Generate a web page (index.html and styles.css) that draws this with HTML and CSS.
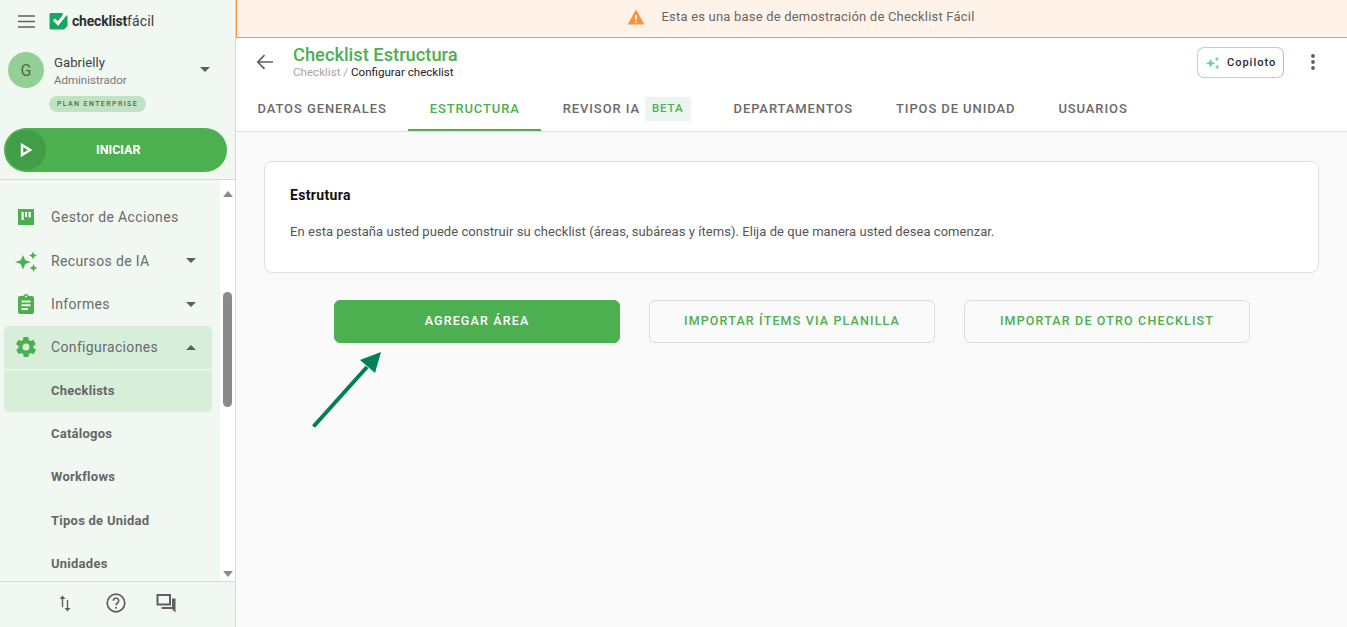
FILE: index.html
```html
<!DOCTYPE html>
<html lang="es">
<head>
    <meta charset="UTF-8">
    <meta name="viewport" content="width=device-width, initial-scale=1.0">
    <title>Checklist Estructura</title>
    <link rel="stylesheet" href="styles.css">
</head>
<body>
    <div class="app">
        <aside class="sidebar">
            <div class="side-top">
                <div class="brand">
                    <svg class="burger" width="17" height="13" viewBox="0 0 17 13"><path d="M0 1h17M0 6.500h17M0 12h17" stroke="#5f5f5f" stroke-width="1.700" fill="none"/></svg>
                    <svg class="logo" width="20" height="20" viewBox="0 0 20 20">
                        <path d="M2 2h12l-1 1.500 5.500 1V15l-3.500 3.500H2a1.500 1.500 0 0 1-1.500-1.500V3.500A1.500 1.500 0 0 1 2 2z" fill="#14a860"/>
                        <path d="M5 8.500l4 4 8-10" stroke="#fff" stroke-width="3" fill="none"/>
                    </svg>
                    <span class="logo-text"><b>checklist</b>fácil</span>
                </div>
                <div class="user">
                    <div class="avatar">G</div>
                    <div class="user-info">
                        <div class="user-name">Gabrielly</div>
                        <div class="user-role">Administrador</div>
                    </div>
                    <span class="caret caret-user"></span>
                </div>
                <div class="plan">PLAN ENTERPRISE</div>
                <button class="start">
                    <span class="start-icon">
                        <svg width="12" height="14" viewBox="0 0 12 14"><path d="M2 2v10l8-5z" fill="none" stroke="#fff" stroke-width="2.400"/></svg>
                    </span>
                    <span class="start-text">INICIAR</span>
                </button>
            </div>
            <div class="side-scroll">
                <nav class="nav">
                    <a class="nav-item">
                        <svg class="nav-icon" width="24" height="24" viewBox="0 0 24 24"><path fill="#4caf50" d="M4 4h16v16H4z"/><path fill="#fff" d="M7.500 7h2.200v8H7.500zM11 7h2v5h-2zM14.500 7h2.200v5.500h-2.200z"/></svg>
                        <span>Gestor de Acciones</span>
                    </a>
                    <a class="nav-item">
                        <svg class="nav-icon" width="24" height="24" viewBox="0 0 24 24"><path fill="#4caf50" d="M9 6l2.300 5.200L17 13l-5.700 2L9 20.500 6.700 15 1 13l5.700-1.800zM19 2.500l1.200 2.800L23 6.500l-2.800 1.200L19 10.500l-1.200-2.800L15 6.500l2.800-1.200zM19.500 15l1.200 2.800 2.800 1.200-2.800 1.200-1.200 2.800-1.200-2.800-2.800-1.200 2.800-1.200z"/></svg>
                        <span>Recursos de IA</span>
                        <span class="caret"></span>
                    </a>
                    <a class="nav-item">
                        <svg class="nav-icon" width="24" height="24" viewBox="0 0 24 24"><path fill="#4caf50" fill-rule="evenodd" d="M6 4h3.200a3 3 0 0 1 5.600 0H18a2 2 0 0 1 2 2v14a2 2 0 0 1-2 2H6a2 2 0 0 1-2-2V6a2 2 0 0 1 2-2zm6-.6a1 1 0 1 0 0 2 1 1 0 0 0 0-2zM7.500 8.500v2h9v-2zm0 3.800v2h9v-2zm0 3.700v2h6.500v-2z"/></svg>
                        <span>Informes</span>
                        <span class="caret"></span>
                    </a>
                    <a class="nav-item is-open">
                        <svg class="nav-icon" width="24" height="24" viewBox="0 0 24 24"><path fill="#4caf50" d="M19.400 13c.1-.3.100-.7.100-1s0-.7-.1-1l2.100-1.600c.2-.2.200-.4.100-.6l-2-3.500c-.1-.2-.4-.3-.6-.2l-2.500 1c-.5-.4-1.100-.7-1.700-1l-.4-2.600c0-.3-.2-.5-.5-.5h-4c-.3 0-.5.200-.5.500l-.4 2.600c-.6.300-1.200.6-1.700 1l-2.500-1c-.2-.1-.5 0-.6.200l-2 3.500c-.1.200-.1.400.1.600L4.600 11c-.1.300-.1.700-.1 1s0 .7.100 1l-2.100 1.600c-.2.200-.2.400-.1.600l2 3.500c.1.200.4.300.6.200l2.500-1c.5.400 1.100.7 1.700 1l.4 2.600c0 .3.200.5.500.5h4c.3 0 .5-.2.500-.5l.4-2.600c.6-.3 1.200-.6 1.700-1l2.500 1c.2.100.5 0 .6-.2l2-3.500c.1-.2.100-.4-.1-.6zM12 15.500a3.500 3.500 0 1 1 0-7 3.500 3.500 0 0 1 0 7z"/></svg>
                        <span>Configuraciones</span>
                        <span class="caret caret-up"></span>
                    </a>
                    <a class="sub-item is-active">Checklists</a>
                    <a class="sub-item">Catálogos</a>
                    <a class="sub-item">Workflows</a>
                    <a class="sub-item">Tipos de Unidad</a>
                    <a class="sub-item">Unidades</a>
                </nav>
                <div class="scrollbar">
                    <span class="sb-arrow"></span>
                    <div class="sb-track"><div class="sb-thumb"></div></div>
                    <span class="sb-arrow sb-arrow-down"></span>
                </div>
            </div>
            <div class="side-foot">
                <svg width="24" height="24" viewBox="0 0 24 24"><path fill="#5f5f5f" d="M8.800 16V8H6.500l3-3.500 3 3.500h-2.300v8zM13.800 9v8h-2.300l3 3.500 3-3.500h-2.300V9z"/></svg>
                <svg width="24" height="24" viewBox="0 0 24 24"><circle cx="12" cy="12" r="8.800" fill="none" stroke="#5f5f5f" stroke-width="1.700"/><path d="M9.300 9.800a2.700 2.700 0 1 1 4.200 2.200c-1 .7-1.500 1.200-1.500 2.200" fill="none" stroke="#5f5f5f" stroke-width="1.600"/><circle cx="12" cy="16.700" r="1" fill="#5f5f5f"/></svg>
                <svg width="24" height="24" viewBox="0 0 24 24"><path fill="none" stroke="#5f5f5f" stroke-width="2" d="M3.500 4h12.500v9.500H3.500z"/><path fill="#5f5f5f" d="M18 7.500h3.500v14L18 18H7.500v-2H18z"/></svg>
            </div>
        </aside>

        <main class="main">
            <div class="banner">
                <svg width="18" height="16" viewBox="0 0 18 16"><path fill="#ff9240" d="M9 .5L17.500 15.500H.5z"/><path fill="#fff" d="M8.200 6h1.600v5H8.200zM8.200 12h1.600v1.600H8.200z"/></svg>
                <span>Esta es una base de demostración de Checklist Fácil</span>
            </div>
            <header class="head">
                <div class="head-row">
                    <svg class="back" width="18" height="16" viewBox="0 0 18 16"><path d="M17 8H2M8.500 1.200L1.800 8l6.700 6.800" fill="none" stroke="#5f5f5f" stroke-width="1.700"/></svg>
                    <div class="titles">
                        <h1>Checklist Estructura</h1>
                        <p class="crumb">Checklist / <span>Configurar checklist</span></p>
                    </div>
                    <button class="copilot">
                        <svg width="15" height="15" viewBox="0 0 24 24"><path fill="#6fd0b0" d="M9 6l2.300 5.200L17 13l-5.700 2L9 20.500 6.700 15 1 13l5.700-1.800z"/><path fill="#6cc5c5" d="M19 2.500l1.200 2.800L23 6.500l-2.800 1.200L19 10.500l-1.200-2.800L15 6.500l2.800-1.200zM19.500 15l1.200 2.800 2.800 1.200-2.800 1.200-1.200 2.800-1.200-2.800-2.800-1.200 2.800-1.200z"/></svg>
                        <span>Copiloto</span>
                    </button>
                    <svg class="more" width="4" height="16" viewBox="0 0 4 16"><circle cx="2" cy="2" r="1.900" fill="#5f5f5f"/><circle cx="2" cy="8" r="1.900" fill="#5f5f5f"/><circle cx="2" cy="14" r="1.900" fill="#5f5f5f"/></svg>
                </div>
                <div class="tabs">
                    <a class="tab">DATOS GENERALES</a>
                    <a class="tab is-active">ESTRUCTURA</a>
                    <a class="tab">REVISOR IA <span class="beta">BETA</span></a>
                    <a class="tab">DEPARTAMENTOS</a>
                    <a class="tab">TIPOS DE UNIDAD</a>
                    <a class="tab">USUARIOS</a>
                </div>
            </header>
            <section class="content">
                <div class="card">
                    <h2>Estrutura</h2>
                    <p>En esta pestaña usted puede construir su checklist (áreas, subáreas y ítems). Elija de que manera usted desea comenzar.</p>
                </div>
                <div class="actions">
                    <button class="btn btn-primary">AGREGAR ÁREA</button>
                    <button class="btn">IMPORTAR ÍTEMS VIA PLANILLA</button>
                    <button class="btn">IMPORTAR DE OTRO CHECKLIST</button>
                </div>
                <svg class="pointer" width="74" height="80" viewBox="0 0 74 80">
                    <path d="M3.500 77.500L57 18" stroke="#008055" stroke-width="4" fill="none"/>
                    <path d="M71 3L50 11 65 24z" fill="#008055"/>
                </svg>
            </section>
        </main>
    </div>
</body>
</html>
```

FILE: styles.css
```css
* {
    box-sizing: border-box;
}

html, body {
    height: 100%;
}

body {
    margin: 0;
    font-family: Roboto, "Liberation Sans", sans-serif;
    color: #5f5f5f;
    overflow: hidden;
}

.app {
    display: flex;
    height: 100vh;
}

/* sidebar */
.sidebar {
    width: 236px;
    flex: none;
    display: flex;
    flex-direction: column;
    background: #f1f8f1;
    border-right: 1px solid #d9d9d9;
}

.side-top {
    height: 180px;
    flex: none;
    padding: 0 8px 0 4px;
    border-bottom: 1px solid #d9d9d9;
}

.brand {
    display: flex;
    align-items: center;
    height: 42px;
    padding-left: 14px;
}

.logo {
    margin-left: 14px;
}

.logo-text {
    margin-left: 3px;
    font-size: 14px;
    letter-spacing: 0.1px;
    color: #3c3c3c;
}

.logo-text b {
    font-weight: 700;
    letter-spacing: -0.2px;
    color: #2f2f2f;
}

.user {
    display: flex;
    align-items: center;
    height: 36px;
    margin-top: 10px;
    padding-left: 4px;
}

.avatar {
    width: 36px;
    height: 36px;
    border-radius: 50%;
    background: #94d096;
    color: #4a6a4b;
    font-size: 16px;
    display: flex;
    align-items: center;
    justify-content: center;
}

.user-info {
    margin-left: 10px;
    margin-top: 3px;
    flex: 1;
}

.user-name {
    font-size: 13.200px;
    line-height: 18px;
    color: #3f3f3f;
}

.user-role {
    font-size: 11.500px;
    line-height: 17px;
    color: #777;
}

.caret {
    width: 0;
    height: 0;
    margin-left: auto;
    border-left: 5px solid transparent;
    border-right: 5px solid transparent;
    border-top: 5px solid #5f5f5f;
}

.caret-user {
    margin-right: 17px;
    margin-top: -2px;
}

.caret-up {
    border-top: 0;
    border-bottom: 5px solid #5f5f5f;
}

.plan {
    width: 97px;
    height: 16px;
    margin: 8px 0 0 45px;
    border-radius: 8px;
    background: #c1e3c3;
    color: #4f6b50;
    font-size: 7px;
    font-weight: 500;
    letter-spacing: 1.400px;
    line-height: 16px;
    text-align: center;
}

.start {
    display: flex;
    align-items: center;
    width: 223px;
    height: 44px;
    margin-top: 16px;
    padding: 0 2px;
    border: 0;
    border-radius: 22px;
    background: #4caf50;
    font-family: inherit;
    color: #fff;
}

.start-icon {
    width: 40px;
    height: 40px;
    border-radius: 50%;
    background: #439c47;
    display: flex;
    align-items: center;
    justify-content: center;
}

.start-text {
    margin: 0 0 2px 50px;
    font-size: 12.500px;
    font-weight: 700;
}

.side-scroll {
    flex: 1;
    display: flex;
    min-height: 0;
}

.nav {
    width: 220px;
    padding: 15.600px 8px 0 4px;
    overflow: hidden;
}

.nav-item, .sub-item {
    display: flex;
    align-items: center;
    height: 43.400px;
    font-size: 14px;
    letter-spacing: 0.35px;
    color: #6a6a6a;
}

.nav-item {
    padding: 0 16px 0 10px;
}

.nav-icon {
    flex: none;
    margin-right: 13px;
}

.is-open {
    background: #d7eeda;
    border-radius: 5px 5px 0 0;
}

.sub-item {
    padding-left: 47px;
    font-size: 13px;
    font-weight: 700;
    letter-spacing: 0.25px;
    color: #666;
}

.sub-item.is-active {
    background: #d7eeda;
    border-radius: 0 0 5px 5px;
    margin-top: 1px;
    height: 41.400px;
}

.scrollbar {
    width: 15px;
    background: #fff;
    display: flex;
    flex-direction: column;
    align-items: center;
    padding: 11px 0 4px;
}

.sb-arrow {
    width: 0;
    height: 0;
    flex: none;
    border-left: 5px solid transparent;
    border-right: 5px solid transparent;
    border-bottom: 6px solid #8a8a8a;
}

.sb-arrow-down {
    border-bottom: 0;
    border-top: 6px solid #8a8a8a;
}

.sb-track {
    flex: 1;
    width: 100%;
    display: flex;
    justify-content: center;
    padding-top: 95px;
}

.sb-thumb {
    width: 9px;
    height: 115px;
    border-radius: 5px;
    background: #8a8a8a;
}

.side-foot {
    height: 46px;
    flex: none;
    display: flex;
    justify-content: center;
    align-items: center;
    gap: 26.500px;
    padding: 0 4px 4px 0;
    border-top: 1px solid #d9d9d9;
}

/* main */
.main {
    flex: 1;
    min-width: 0;
    display: flex;
    flex-direction: column;
    background: #fafafa;
}

.banner {
    height: 38px;
    flex: none;
    display: flex;
    align-items: center;
    justify-content: center;
    gap: 16px;
    padding: 0 0 4px 18px;
    background: #fff3e9;
    border-bottom: 1px solid #ff9240;
    border-left: 1px solid #ff9240;
    font-size: 13px;
    letter-spacing: 0.2px;
    color: #666;
}

.head {
    height: 94px;
    flex: none;
    background: #fff;
    border-bottom: 1px solid #e0e0e0;
}

.head-row {
    display: flex;
    align-items: center;
    height: 48px;
    padding: 0 32px 0 20px;
}

.titles {
    margin-left: 19px;
    flex: 1;
}

h1 {
    margin: 0;
    font-size: 18.300px;
    line-height: 20px;
    font-weight: 500;
    color: #4caf50;
}

.crumb {
    margin: 0;
    font-size: 11.600px;
    line-height: 14px;
    color: #a5a5a5;
}

.crumb span {
    color: #222;
}

.copilot {
    display: flex;
    align-items: center;
    gap: 7px;
    width: 87px;
    height: 31px;
    padding: 0 0 0 7px;
    border: 1px solid #a5d8d8;
    border-right-color: #93c4e4;
    border-radius: 7px;
    background: #fff;
    font-family: inherit;
    font-size: 11px;
    font-weight: 500;
    letter-spacing: 1px;
    color: #1f2a3a;
}

.more {
    margin-left: 27px;
}

.tabs {
    display: flex;
    height: 45px;
}

.tab {
    display: flex;
    align-items: center;
    padding: 0 21.500px;
    font-size: 13px;
    font-weight: 500;
    letter-spacing: 0.9px;
    color: #6a6a6a;
}

.tab.is-active {
    color: #4caf50;
    border-bottom: 2px solid #4caf50;
    padding-top: 2px;
    letter-spacing: 0.85px;
}

.beta {
    margin-left: 5px;
    padding: 0 7px;
    height: 24px;
    line-height: 22px;
    background: #edf6ee;
    color: #4caf50;
    font-size: 11.500px;
}

.content {
    position: relative;
    flex: 1;
    padding: 29px 28px 0;
}

.card {
    height: 112px;
    padding: 24px 25px 0;
    background: #fff;
    border: 1px solid #e0e0e0;
    border-radius: 8px;
}

h2 {
    margin: 0;
    font-size: 14px;
    letter-spacing: 0.35px;
    line-height: 18px;
    font-weight: 700;
    color: #111;
}

.card p {
    margin: 19px 0 0;
    font-size: 13px;
    letter-spacing: 0.05px;
    line-height: 18px;
    color: #555;
}

.actions {
    display: flex;
    justify-content: center;
    gap: 29px;
    margin-top: 27px;
    padding-left: 1px;
}

.btn {
    width: 286px;
    height: 43px;
    padding-bottom: 3px;
    border: 1px solid #dcdcdc;
    border-radius: 6px;
    background: #fafafa;
    font-family: inherit;
    font-size: 12.500px;
    font-weight: 500;
    letter-spacing: 1.150px;
    color: #4caf50;
}

.btn-primary {
    background: #4caf50;
    border-color: #4caf50;
    color: #fff;
}

.pointer {
    position: absolute;
    left: 74px;
    top: 217px;
}
```
